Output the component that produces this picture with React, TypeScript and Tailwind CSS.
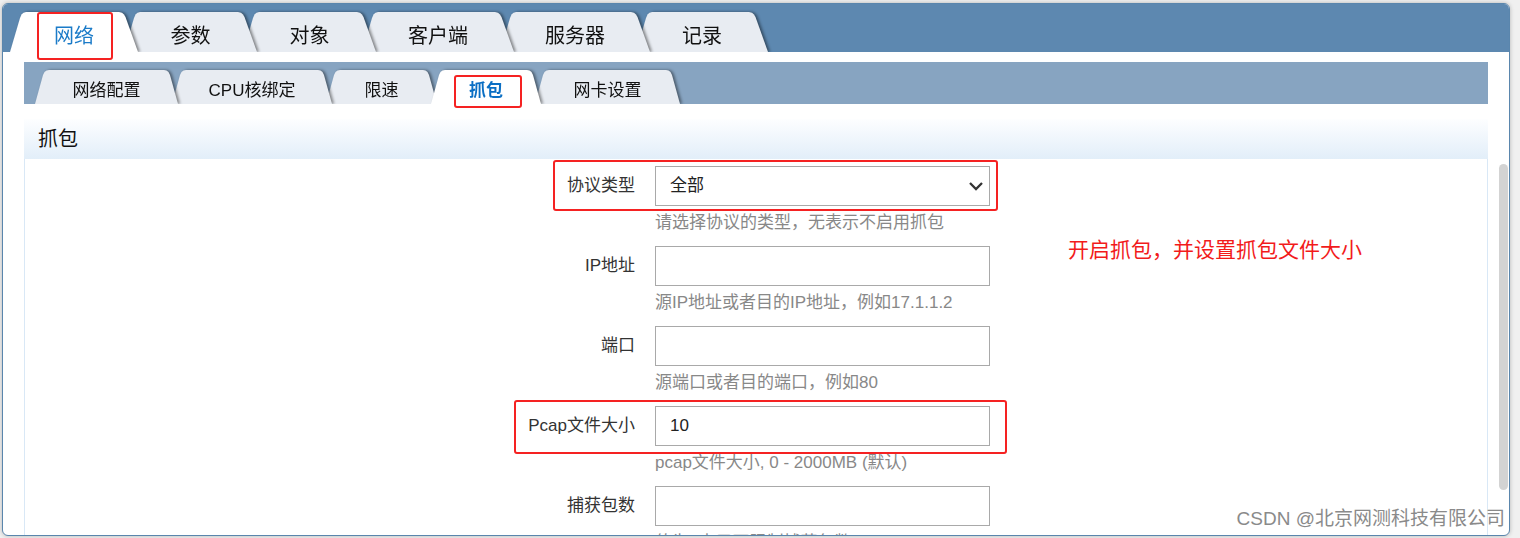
import { ReactNode } from 'react';

type TabDef = {
  label: string;
  width: string;
  z: string;
  active?: boolean;
};

const topTabs: TabDef[] = [
  { label: '网络', width: 'w-[128px]', z: 'z-[10]', active: true },
  { label: '参数', width: 'w-[133px]', z: 'z-[5]' },
  { label: '对象', width: 'w-[133px]', z: 'z-[4]' },
  { label: '客户端', width: 'w-[152px]', z: 'z-[3]' },
  { label: '服务器', width: 'w-[150px]', z: 'z-[2]' },
  { label: '记录', width: 'w-[132px]', z: 'z-[1]' },
];

const subTabs: TabDef[] = [
  { label: '网络配置', width: 'w-[143px]', z: 'z-[5]' },
  { label: 'CPU核绑定', width: 'w-[160px]', z: 'z-[4]' },
  { label: '限速', width: 'w-[111px]', z: 'z-[3]' },
  { label: '抓包', width: 'w-[110px]', z: 'z-[10]', active: true },
  { label: '网卡设置', width: 'w-[145px]', z: 'z-[1]' },
];

function TopTab({ tab, first }: { tab: TabDef; first: boolean }) {
  return (
    <div
      className={`relative h-[40px] ${tab.width} ${tab.z} ${first ? '' : '-ml-[14px]'} [filter:drop-shadow(2px_0_1.5px_rgba(0,0,0,0.45))]`}
    >
      <div
        className={`flex h-full w-full items-center justify-center pt-[7px] text-[20px] [clip-path:polygon(0_100%,10px_6px,11.5px_2.5px,13.5px_0.7px,16px_0,calc(100%_-_19px)_0,calc(100%_-_16px)_0.7px,calc(100%_-_14px)_2.5px,calc(100%_-_12.5px)_5px,100%_100%)] ${
          tab.active ? 'bg-white text-[#1b7bc8]' : 'bg-[#e8ecf2] text-[#111]'
        }`}
      >
        {tab.label}
      </div>
    </div>
  );
}

function SubTab({ tab, first }: { tab: TabDef; first: boolean }) {
  return (
    <div
      className={`relative h-[34px] ${tab.width} ${tab.z} ${first ? '' : '-ml-[6px]'} [filter:drop-shadow(2px_0_1.5px_rgba(0,0,0,0.45))]`}
    >
      <div
        className={`flex h-full w-full items-center justify-center pt-[7px] text-[17px] [clip-path:polygon(0_100%,8px_5px,9.5px_2px,11.5px_0.5px,14px_0,calc(100%_-_14px)_0,calc(100%_-_11.5px)_0.5px,calc(100%_-_9.5px)_2px,calc(100%_-_8px)_5px,100%_100%)] ${
          tab.active ? 'bg-white font-bold text-[#0b6fc4]' : 'bg-[#e8ecf2] text-[#111]'
        }`}
      >
        {tab.label}
      </div>
    </div>
  );
}

function FormRow({ label, help, children }: { label: string; help: string; children: ReactNode }) {
  return (
    <div className="flex flex-col">
      <div className="flex h-[40px] items-center">
        <div className="w-[630px] pr-[20px] text-right text-[17px] text-[#333]">{label}</div>
        <div className="h-[40px] w-[335px]">{children}</div>
      </div>
      <div className="h-[40px] pl-[630px] pt-[5px] text-[17px] leading-[24px] text-[#888]">{help}</div>
    </div>
  );
}

function TextBox({ value = '' }: { value?: string }) {
  return (
    <div className="flex h-full w-full items-center border border-[#a9a9a9] bg-white pl-[14px] text-[17px] text-[#222]">
      {value}
    </div>
  );
}

export default function App() {
  return (
    <div className="relative h-[538px] w-[1520px] overflow-hidden bg-[#f0f0f0] pl-[2px] pt-[3px] font-['Liberation_Sans','Noto_Sans_CJK_SC',sans-serif]">
      <div className="flex h-[533px] w-[1508px] flex-col overflow-hidden rounded-[6px] border border-[#5a86ad] bg-white shadow-[0_0_4px_rgba(0,0,0,0.25)]">
        {/* main tabs */}
        <div className="flex h-[48px] shrink-0 items-end overflow-hidden bg-[#5d88b0] pl-[7px]">
          {topTabs.map((t, i) => (
            <TopTab key={t.label} tab={t} first={i === 0} />
          ))}
        </div>

        <div className="flex min-h-0 flex-1">
          <div className="flex w-[1486px] flex-col pl-[21px] pr-[1px] pt-[10px]">
            {/* sub tabs */}
            <div className="flex h-[42px] shrink-0 items-end overflow-hidden bg-[#87a4c1] pl-[11px]">
              {subTabs.map((t, i) => (
                <SubTab key={t.label} tab={t} first={i === 0} />
              ))}
            </div>

            <div className="mt-[15px] flex h-[40px] shrink-0 items-center bg-linear-to-b from-[#fdfeff] to-[#e2eef9] pl-[14px] text-[20px] text-[#111]">
              抓包
            </div>

            <div className="flex-1 border-x border-[#d9e8f6] pt-[7px]">
              <FormRow label="协议类型" help="请选择协议的类型，无表示不启用抓包">
                <div className="flex h-full w-full items-center justify-between border border-[#a9a9a9] bg-white pl-[14px] pr-[5px] text-[17px] text-[#222]">
                  <span>全部</span>
                  <svg width="16" height="10" viewBox="0 0 16 10" fill="none">
                    <path d="M2 2 L8 8 L14 2" stroke="#333" strokeWidth="2.3" />
                  </svg>
                </div>
              </FormRow>
              <FormRow label="IP地址" help="源IP地址或者目的IP地址，例如17.1.1.2">
                <TextBox />
              </FormRow>
              <FormRow label="端口" help="源端口或者目的端口，例如80">
                <TextBox />
              </FormRow>
              <FormRow label="Pcap文件大小" help="pcap文件大小, 0 - 2000MB (默认)">
                <TextBox value="10" />
              </FormRow>
              <FormRow label="捕获包数" help="值为0表示不限制捕获包数">
                <TextBox />
              </FormRow>
            </div>
          </div>

          {/* scrollbar */}
          <div className="w-[20px] shrink-0 pl-[10px] pt-[112px]">
            <div className="h-[326px] w-[9px] rounded-full bg-[#d3d3d3]" />
          </div>
        </div>
      </div>

      {/* annotations */}
      <div className="absolute left-[37px] top-[12px] z-[20] h-[48px] w-[76px] rounded-[3px] border-2 border-[#f52222]" />
      <div className="absolute left-[454px] top-[75px] z-[20] h-[33px] w-[68px] rounded-[3px] border-2 border-[#f52222]" />
      <div className="absolute left-[553px] top-[160px] z-[20] h-[51px] w-[445px] rounded-[3px] border-2 border-[#f52222]" />
      <div className="absolute left-[514px] top-[400px] z-[20] h-[54px] w-[493px] rounded-[3px] border-2 border-[#f52222]" />
      <div className="absolute left-[1068px] top-[236px] z-[20] text-[21px] leading-[28px] text-[#f21b1b]">
        开启抓包，并设置抓包文件大小
      </div>
      <div className="absolute right-[15px] top-[507px] z-[20] text-[19px] leading-[24px] text-[#8a8a8a] [text-shadow:0_0_2px_#fff]">
        CSDN @北京网测科技有限公司
      </div>
    </div>
  );
}
